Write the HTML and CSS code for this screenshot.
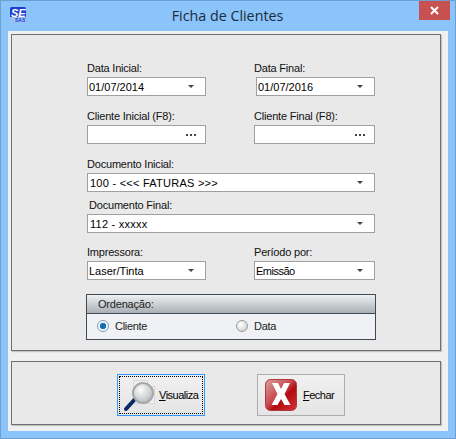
FILE: index.html
```html
<!DOCTYPE html>
<html lang="pt">
<head>
    <meta charset="UTF-8">
    <meta name="viewport" content="width=device-width, initial-scale=1.0">
    <title>Ficha de Clientes</title>
    <link rel="stylesheet" href="styles.css">
</head>
<body>
    <div class="window">
        <div class="titlebar">
            <svg class="app-icon" width="16" height="16" viewBox="0 0 16 16">
                <rect x="0" y="0" width="16" height="11" rx="1.5" fill="#1f3fd0"/>
                <rect x="0" y="10" width="16" height="6" fill="#9cc0f0"/>
                <text x="1" y="9.5" class="app-icon-main">SE</text>
                <text x="5" y="15" class="app-icon-sub">SAS</text>
            </svg>
            <div class="title">Ficha de Clientes</div>
            <div class="close-btn">
                <svg width="9" height="9" viewBox="0 0 9 9">
                    <path d="M1 1 L8 8 M8 1 L1 8" stroke="#fff" stroke-width="2"/>
                </svg>
            </div>
        </div>

        <div class="client">
            <div class="panel form-panel">
                <div class="row">
                    <div class="field">
                        <div class="label">Data Inicial:</div>
                        <div class="input"><span>01/07/2014</span><i class="arrow"></i></div>
                    </div>
                    <div class="field">
                        <div class="label">Data Final:</div>
                        <div class="input input-short"><span>01/07/2016</span><i class="arrow"></i></div>
                    </div>
                </div>
                <div class="row">
                    <div class="field">
                        <div class="label">Cliente Inicial (F8):</div>
                        <div class="input"><span></span><i class="dots"></i></div>
                    </div>
                    <div class="field">
                        <div class="label">Cliente Final (F8):</div>
                        <div class="input"><span></span><i class="dots"></i></div>
                    </div>
                </div>
                <div class="field">
                    <div class="label">Documento Inicial:</div>
                    <div class="input input-doc"><span class="text-wide">100 - &lt;&lt;&lt; FATURAS &gt;&gt;&gt;</span><i class="arrow"></i></div>
                </div>
                <div class="field field-tight">
                    <div class="label label-indent">Documento Final:</div>
                    <div class="input input-doc"><span class="text-wide">112 - xxxxx</span><i class="arrow"></i></div>
                </div>
                <div class="row row-tight">
                    <div class="field">
                        <div class="label">Impressora:</div>
                        <div class="input"><span>Laser/Tinta</span><i class="arrow"></i></div>
                    </div>
                    <div class="field">
                        <div class="label">Período por:</div>
                        <div class="input"><span class="text-narrow">Emissão</span><i class="arrow"></i></div>
                    </div>
                </div>
                <div class="group">
                    <div class="group-head">Ordenação:</div>
                    <div class="group-body">
                        <div class="radio-item"><i class="radio radio-on"></i>Cliente</div>
                        <div class="radio-item"><i class="radio"></i>Data</div>
                    </div>
                </div>
            </div>

            <div class="panel button-panel">
                <div class="btn btn-focus">
                    <div class="btn-inner">
                        <svg width="32" height="34" viewBox="0 0 32 34">
                            <defs>
                                <radialGradient id="lens" cx="0.4" cy="0.35" r="0.7">
                                    <stop offset="0" stop-color="#fdfdfd"/>
                                    <stop offset="1" stop-color="#b5b8ba"/>
                                </radialGradient>
                            </defs>
                            <path d="M9.500 2.500 H24 L30.500 8.500 V25.500 H9.500 Z" fill="#efefef" stroke="#d8d8d8"/>
                            <path d="M24 2.500 V8.500 H30.500" fill="#fafafa" stroke="#d8d8d8"/>
                            <path d="M2 31 L12 20" stroke="#0a2a66" stroke-width="4" stroke-linecap="round"/>
                            <circle cx="19" cy="15" r="10" fill="url(#lens)" stroke="#a4a8aa" stroke-width="2"/>
                        </svg>
                        <span><u>V</u>isualiza</span>
                    </div>
                </div>
                <div class="btn">
                    <div class="btn-inner btn-inner-close">
                        <svg width="32" height="32" viewBox="0 0 32 32">
                            <defs>
                                <linearGradient id="red" x1="0" y1="0" x2="1" y2="1">
                                    <stop offset="0" stop-color="#d9a0a0"/>
                                    <stop offset="0.45" stop-color="#c8484c"/>
                                    <stop offset="0.6" stop-color="#b00c12"/>
                                    <stop offset="1" stop-color="#d8353a"/>
                                </linearGradient>
                            </defs>
                            <rect x="0.5" y="0.5" width="31" height="31" rx="5" fill="url(#red)" stroke="#b03a3e"/>
                            <path d="M7 4 H13 L16 10 L19 4 H25 L19.500 15 L25.500 26 H19.500 L16 20 L12.500 26 H6.500 L12.500 15 Z" fill="#fff"/>
                        </svg>
                        <span><u>F</u>echar</span>
                    </div>
                </div>
            </div>
        </div>
    </div>
</body>
</html>
```

FILE: styles.css
```css
* {
    box-sizing: border-box;
}

body {
    margin: 0;
    font-family: "Liberation Sans", Arial, sans-serif;
    font-size: 11px;
    color: #000;
}

.window {
    width: 456px;
    height: 439px;
    background-color: #8ac4fb;
    border: 1px solid #6d9fd2;
    display: flex;
    flex-direction: column;
}

.titlebar {
    height: 30px;
    display: flex;
    align-items: flex-start;
    padding-left: 9px;
    padding-right: 5px;
}

.app-icon {
    margin-top: 6px;
}

.app-icon-main {
    font-family: "Liberation Sans", sans-serif;
    font-size: 11px;
    font-weight: bold;
    font-style: italic;
    fill: #fff;
}

.app-icon-sub {
    font-family: "Liberation Sans", sans-serif;
    font-size: 5px;
    font-weight: bold;
    fill: #1f3fd0;
}

.title {
    flex: 1;
    text-align: center;
    font-family: "Open Sans", sans-serif;
    font-size: 14.3px;
    line-height: 30px;
    color: #1c2b3a;
    padding-left: 10px;
}

.close-btn {
    width: 31px;
    height: 19px;
    background-color: #c75050;
    display: flex;
    align-items: center;
    justify-content: center;
}

.client {
    flex: 1;
    margin: 0 7px 7px 7px;
    padding: 3px 7px 6px 3px;
    background-color: #f0f0f0;
    display: flex;
    flex-direction: column;
    gap: 10px;
}

.panel {
    background-color: #e9e9e9;
    border: 1px solid #6f6f6f;
    box-shadow: 1px 1px 1px #c4c4c4;
}

.form-panel {
    height: 317px;
    padding: 27px 0 0 75px;
    display: flex;
    flex-direction: column;
    gap: 14px;
}

.row {
    display: grid;
    grid-template-columns: 119px 121px;
    column-gap: 48px;
}

.row-tight {
    margin-top: -1px;
}

.field {
    width: 288px;
}

.row .field {
    width: auto;
}

.field-tight {
    margin-top: -7px;
}

.label {
    height: 14px;
    line-height: 13px;
    margin-bottom: 1px;
    color: #111;
    letter-spacing: -0.2px;
}

.label-indent {
    padding-left: 2px;
}

.input {
    height: 19px;
    background-color: #fff;
    border: 1px solid #a0a0a0;
    display: flex;
    align-items: center;
    justify-content: space-between;
    padding: 0 11px 0 1px;
    white-space: nowrap;
    font-size: 11px;
}

.input-short {
    width: 119px;
    margin-left: 2px;
}

.input-doc {
    padding-left: 2px;
}

.text-wide {
    letter-spacing: 0.25px;
}

.text-narrow {
    letter-spacing: -0.5px;
}

.arrow {
    width: 0;
    height: 0;
    border-left: 3px solid transparent;
    border-right: 3px solid transparent;
    border-top: 3px solid #444;
}

.dots {
    width: 2px;
    height: 2px;
    margin-right: 6px;
    background-color: #444;
    box-shadow: 4px 0 #444, 8px 0 #444;
}

.group {
    width: 290px;
    height: 46px;
    margin-left: -1px;
    border: 1px solid #3f4a55;
    background-color: #eff1f4;
}

.group-head {
    height: 19px;
    line-height: 18px;
    padding-left: 11px;
    color: #222;
    letter-spacing: -0.2px;
    background: linear-gradient(#eef0f2, #aab0b6);
    border-bottom: 1px solid #3f4a55;
}

.group-body {
    display: grid;
    grid-template-columns: 139px 1fr;
    padding: 4px 0 0 10px;
}

.radio-item {
    display: flex;
    align-items: center;
    gap: 6px;
    height: 15px;
    color: #222;
    letter-spacing: -0.3px;
}

.radio {
    width: 12px;
    height: 12px;
    border-radius: 50%;
    border: 1px solid #9a9a9a;
    background: radial-gradient(circle at 35% 35%, #fff, #c8c8c8);
}

.radio-on {
    border-color: #7d9fb8;
    background: radial-gradient(circle, #0e5f9c 0, #1a7cc0 3px, #fff 3.6px, #dde5ea 6px);
}

.button-panel {
    height: 64px;
    padding-left: 105px;
    padding-top: 12px;
    display: flex;
    align-items: flex-start;
    gap: 52px;
}

.btn {
    width: 88px;
    height: 42px;
    padding: 1px;
    border: 1px solid #adadad;
    background: linear-gradient(#f0f0f0, #e5e5e5);
    letter-spacing: -0.5px;
}

.btn-focus {
    border-color: #3399ff;
}

.btn-inner {
    height: 100%;
    display: flex;
    align-items: center;
    padding-left: 4px;
    gap: 3px;
    border: 1px dotted transparent;
}

.btn-focus .btn-inner {
    border-color: #000;
}

.btn-inner-close {
    padding-left: 5px;
    gap: 6px;
}
```
